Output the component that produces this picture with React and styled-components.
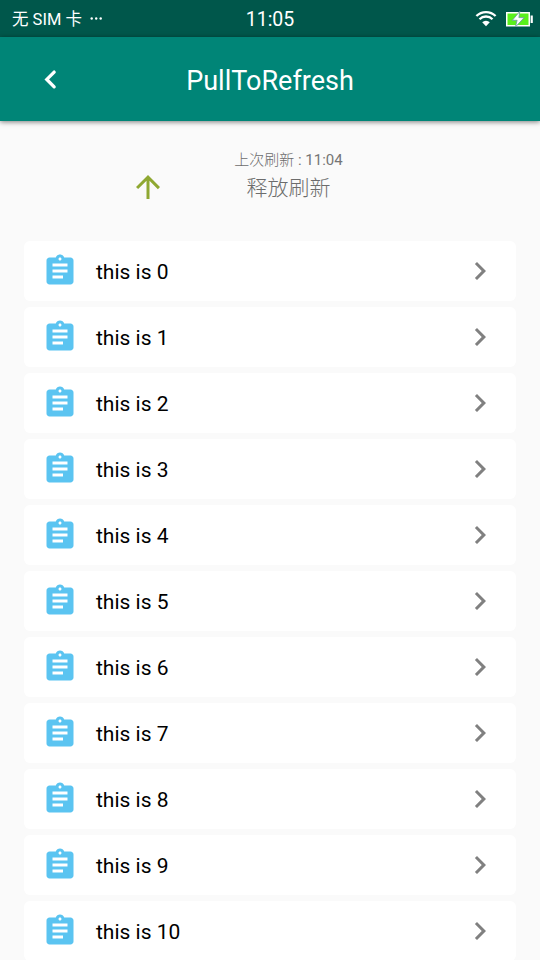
import React from 'react'
import styled, { createGlobalStyle } from 'styled-components'

const GlobalStyle = createGlobalStyle`
	* {
		box-sizing: border-box;
	}

	body {
		margin: 0;
		background: #fafafa;
		font-family: Roboto, 'Noto Sans CJK SC', sans-serif;
		overflow: hidden;
	}
`

const Screen = styled.div`
	display: flex;
	flex-direction: column;
	width: 540px;
	height: 960px;
	overflow: hidden;
	background: #fafafa;
`

const StatusBar = styled.div`
	display: grid;
	grid-template-columns: 1fr auto 1fr;
	align-items: center;
	flex: none;
	height: 37px;
	padding: 2px 7px 0 12px;
	background: #00574b;
	color: #fff;
`

const Carrier = styled.span`
	display: flex;
	align-items: center;
	gap: 8px;
	font-size: 16.5px;
	line-height: 24px;
	white-space: pre;
`

const Dots = styled.svg`
	width: 13px;
	height: 3px;
	margin-bottom: 2px;
	fill: #fff;
`

const Clock = styled.span`
	margin-right: 5px;
	font-size: 19.5px;
	line-height: 24px;
`

const StatusIcons = styled.span`
	display: flex;
	justify-content: flex-end;
	align-items: center;
	gap: 9px;
	padding-bottom: 2px;
`

const AppBar = styled.header`
	display: grid;
	grid-template-columns: 84px 1fr 84px;
	align-items: center;
	flex: none;
	height: 84px;
	padding: 0 9px;
	background: #008577;
	color: #fff;
	box-shadow: 0 1px 5px rgba(0, 0, 0, 0.5);
`

const BackButton = styled.button`
	display: flex;
	justify-content: center;
	padding: 0;
	border: 0;
	background: none;
	color: inherit;
`

const Title = styled.h1`
	margin: 0;
	padding-top: 4px;
	font-size: 27px;
	font-weight: 400;
	line-height: 34px;
	text-align: center;
`

const RefreshHeader = styled.div`
	display: grid;
	grid-template-columns: 36px 216px;
	column-gap: 15px;
	flex: none;
	height: 120px;
	padding: 27px 0 0 129.5px;
	color: #757575;
`

const ArrowSlot = styled.div`
	padding-top: 21px;
	color: #8fa832;
`

const RefreshText = styled.div`
	display: flex;
	flex-direction: column;
	align-items: center;
`

const LastRefresh = styled.span`
	font-size: 15px;
	line-height: 22px;
`

const Hanzi = styled.span`
	font-family: 'Noto Sans CJK SC', sans-serif;
	font-weight: 300;
	color: #6c6c6c;
`

const RefreshState = styled.span`
	font-size: 21px;
	line-height: 30px;
`

const List = styled.ul`
	display: flex;
	flex-direction: column;
	gap: 6px;
	margin: 0;
	padding: 0 24px;
	list-style: none;
`

const Item = styled.li`
	display: flex;
	align-items: center;
	gap: 18px;
	flex: none;
	height: 60px;
	padding: 0 18px;
	border-radius: 6px;
	background: #fff;
	color: #000;
`

const ItemLabel = styled.span`
	flex: 1;
	padding-top: 1px;
	font-size: 21px;
	line-height: 26px;
`

const Icon = styled.svg`
	display: block;
	flex: none;
	width: 36px;
	height: 36px;
	fill: ${props => props.$color || 'currentColor'};
`

const WifiIcon = () => (
	<svg width="22" height="17" viewBox="0 0 22 17" fill="none" stroke="#fff">
		<path d="M1.4 6a13.6 13.6 0 0 1 19.2 0" strokeWidth="2.3" />
		<path d="M4.5 9.2a9.2 9.2 0 0 1 13 0" strokeWidth="2.3" />
		<path d="M7.2 12.2a5.4 5.4 0 0 1 7.6 0L11 16.2z" fill="#fff" stroke="none" />
	</svg>
)

const BatteryIcon = () => (
	<svg width="27" height="16" viewBox="0 0 27 16">
		<rect x="0.75" y="1.75" width="22.5" height="13" fill="#59f01c" stroke="#fff" strokeWidth="1.5" />
		<rect x="24.6" y="4.5" width="2.2" height="7.5" fill="#fff" />
		<path
			d="M13.8 0.4L6.3 9.3h4.8L9.4 16 18.2 6.6h-5.3z"
			fill="#fff"
			stroke="#6f9f9f"
			strokeWidth="0.9"
		/>
	</svg>
)

const items = Array.from({ length: 11 }, (_, index) => `this is ${index}`)

const App = () => (
	<Screen>
		<GlobalStyle />
		<StatusBar>
			<Carrier>
				<span>无 SIM 卡</span>
				<Dots viewBox="0 0 13 3">
					<circle cx="1.7" cy="1.5" r="1.2" />
					<circle cx="6.2" cy="1.5" r="1.2" />
					<circle cx="10.7" cy="1.5" r="1.2" />
				</Dots>
			</Carrier>
			<Clock>11:05</Clock>
			<StatusIcons>
				<WifiIcon />
				<BatteryIcon />
			</StatusIcons>
		</StatusBar>
		<AppBar>
			<BackButton type="button" aria-label="Back">
				<Icon viewBox="0 0 24 24">
					<path
						d="M14.1 7.4L9.2 12.3l4.9 4.9"
						fill="none"
						stroke="#fff"
						strokeWidth="2.2"
						strokeLinecap="round"
					/>
				</Icon>
			</BackButton>
			<Title>PullToRefresh</Title>
		</AppBar>
		<RefreshHeader>
			<ArrowSlot>
				<Icon viewBox="0 0 24 24">
					<path d="M4 12l1.41 1.41L11 7.83V20h2V7.83l5.58 5.59L20 12l-8-8-8 8z" />
				</Icon>
			</ArrowSlot>
			<RefreshText>
				<LastRefresh>
					<Hanzi>上次刷新</Hanzi> : 11:04
				</LastRefresh>
				<RefreshState>
					<Hanzi>释放刷新</Hanzi>
				</RefreshState>
			</RefreshText>
		</RefreshHeader>
		<List>
			{items.map(label => (
				<Item key={label}>
					<Icon viewBox="0 0 24 24" $color="#5bc4f1">
						<path d="M19 3h-4.18C14.4 1.84 13.3 1 12 1c-1.3 0-2.4.84-2.82 2H5c-1.1 0-2 .9-2 2v14c0 1.1.9 2 2 2h14c1.1 0 2-.9 2-2V5c0-1.1-.9-2-2-2zm-7 0c.55 0 1 .45 1 1s-.45 1-1 1-1-.45-1-1 .45-1 1-1zm2 14H7v-2h7v2zm3-4H7v-2h10v2zm0-4H7V7h10v2z" />
					</Icon>
					<ItemLabel>{label}</ItemLabel>
					<Icon viewBox="0 0 24 24" $color="#808080">
						<path d="M10 6L8.59 7.41 13.17 12l-4.58 4.59L10 18l6-6z" />
					</Icon>
				</Item>
			))}
		</List>
	</Screen>
)

export default App
